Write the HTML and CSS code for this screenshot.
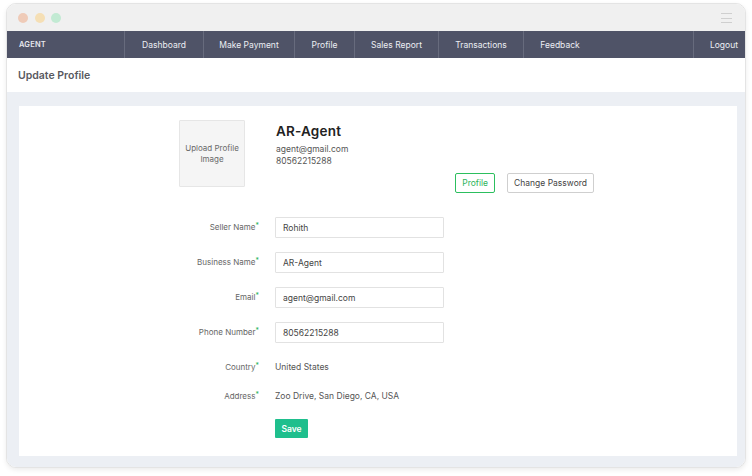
FILE: index.html
```html
<!DOCTYPE html>
<html lang="en">
<head>
<meta charset="utf-8">
<title>Update Profile</title>
<link rel="stylesheet" href="styles.css">
</head>
<body>
<div class="window">
  <div class="titlebar">
    <div class="dots">
      <span class="dot dot-red"></span>
      <span class="dot dot-yellow"></span>
      <span class="dot dot-green"></span>
    </div>
    <div class="burger"><span></span><span></span><span></span></div>
  </div>
  <nav class="nav">
    <div class="brand">AGENT</div>
    <a class="nav-item">Dashboard</a>
    <a class="nav-item">Make Payment</a>
    <a class="nav-item">Profile</a>
    <a class="nav-item">Sales Report</a>
    <a class="nav-item">Transactions</a>
    <a class="nav-item">Feedback</a>
    <div class="nav-spacer"></div>
    <a class="nav-item nav-logout">Logout</a>
  </nav>
  <div class="page-header">Update Profile</div>
  <div class="content">
    <div class="card">
      <div class="profile-top">
        <div class="upload">Upload Profile<br>Image</div>
        <div class="info">
          <div class="name">AR-Agent</div>
          <div class="meta">agent@gmail.com</div>
          <div class="meta">80562215288</div>
          <div class="tabs">
            <button class="btn btn-active">Profile</button>
            <button class="btn">Change Password</button>
          </div>
        </div>
      </div>
      <form class="form">
        <div class="row">
          <label class="label">Seller Name<span class="req">*</span></label>
          <input class="input" value="Rohith">
        </div>
        <div class="row">
          <label class="label">Business Name<span class="req">*</span></label>
          <input class="input" value="AR-Agent">
        </div>
        <div class="row">
          <label class="label">Email<span class="req">*</span></label>
          <input class="input" value="agent@gmail.com">
        </div>
        <div class="row">
          <label class="label">Phone Number<span class="req">*</span></label>
          <input class="input" value="80562215288">
        </div>
        <div class="row row-static">
          <label class="label">Country<span class="req">*</span></label>
          <span class="value">United States</span>
        </div>
        <div class="row row-static row-last">
          <label class="label">Address<span class="req">*</span></label>
          <span class="value">Zoo Drive, San Diego, CA, USA</span>
        </div>
        <div class="row row-save">
          <span class="label"></span>
          <button type="button" class="save">Save</button>
        </div>
      </form>
    </div>
  </div>
</div>
</body>
</html>
```
FILE: styles.css
```css
* { box-sizing: border-box; }
html, body { margin: 0; padding: 0; }
body {
  background: #ffffff;
  font-family: Inter, "Open Sans", sans-serif;
  width: 752px;
  height: 476px;
  overflow: hidden;
}
.window {
  margin: 3px 0 0 6px;
  width: 740px;
  height: 465px;
  border: 1px solid #e4e4e4;
  border-radius: 10px;
  overflow: hidden;
  display: flex;
  flex-direction: column;
  box-shadow: 0 2px 5px rgba(0,0,0,0.08);
  background: #fff;
}
.titlebar {
  height: 27px;
  background: #f0f0f0;
  display: flex;
  align-items: center;
  justify-content: space-between;
  padding: 0 13px 0 11px;
  flex-shrink: 0;
}
.dots { display: flex; gap: 6.5px; margin-top: 1px; }
.dot { width: 10px; height: 10px; border-radius: 50%; display: block; }
.dot-red { background: #efcbb8; }
.dot-yellow { background: #f5dfb5; }
.dot-green { background: #c2ead3; }
.burger { display: flex; flex-direction: column; gap: 3.3px; width: 11px; margin-top: 1px; }
.burger span { display: block; height: 1px; background: #cfcfcf; }

.nav {
  height: 27px;
  background: #4f5367;
  display: flex;
  align-items: stretch;
  flex-shrink: 0;
  color: #eceef3;
  font-size: 8.5px;
}
.brand {
  width: 117px;
  padding-left: 12px;
  display: flex;
  align-items: center;
  font-size: 7.5px;
  font-weight: 600;
  letter-spacing: 0.2px;
  color: #e6e7ee;
}
.nav-item {
  display: flex;
  align-items: center;
  justify-content: center;
  border-left: 1px solid #676b7d;
  white-space: nowrap;
}
.nav-item:nth-of-type(1) { width: 79px; }
.nav-item:nth-of-type(2) { width: 91px; }
.nav-item:nth-of-type(3) { width: 60px; }
.nav-item:nth-of-type(4) { width: 84px; }
.nav-item:nth-of-type(5) { width: 85px; }
.nav-item:nth-of-type(6) { width: 73px; }
.nav-spacer { flex: 1; }
.nav-logout { padding: 0 7px 0 16px; width: auto; justify-content: flex-start; }

.page-header {
  height: 34px;
  flex-shrink: 0;
  padding-left: 11px;
  display: flex;
  align-items: center;
  font-size: 10.5px;
  font-weight: 600;
  color: #58595f;
  background: #fff;
}
.content {
  flex: 1;
  background: #eceff4;
  padding: 14px 8px 11px 12px;
  display: flex;
}
.card {
  flex: 1;
  background: #fff;
  padding: 14px 0 0 160px;
}
.profile-top { display: flex; align-items: flex-start; }
.upload {
  width: 66px;
  height: 67px;
  background: #f5f5f5;
  border: 1px solid #e6e6e6;
  border-radius: 1px;
  display: flex;
  align-items: center;
  justify-content: center;
  text-align: center;
  font-size: 8px;
  line-height: 11px;
  color: #6a6a6a;
}
.info {
  margin-left: 31px;
  width: 318px;
  padding-top: 3px;
  display: flex;
  flex-direction: column;
}
.name {
  font-size: 13.5px;
  font-weight: 600;
  line-height: 16px;
  color: #222;
  letter-spacing: 0.2px;
  margin-bottom: 4px;
}
.meta {
  font-size: 8.5px;
  line-height: 12px;
  color: #555;
}
.tabs {
  display: flex;
  justify-content: flex-end;
  gap: 12px;
  margin-top: 6px;
}
.btn {
  height: 20px;
  padding: 0 6px;
  background: #fff;
  border: 1px solid #cfcfcf;
  border-radius: 2px;
  font-family: inherit;
  font-size: 8.5px;
  color: #444;
}
.btn-active {
  border: 1.5px solid #2cbf5e;
  color: #2cb35a;
}

.form {
  margin-top: 24px;
  display: flex;
  flex-direction: column;
}
.row {
  display: flex;
  align-items: center;
  height: 21px;
  margin-bottom: 14px;
}
.label {
  width: 80px;
  margin-right: 16px;
  text-align: right;
  font-size: 8px;
  color: #666;
  line-height: 12px;
  margin-top: -2px;
}
.req { color: #2cb35a; font-size: 7px; vertical-align: 2px; }
.input {
  width: 169px;
  height: 21px;
  border: 1px solid #e2e2e2;
  border-radius: 1px;
  padding: 0 7px;
  font-family: inherit;
  font-size: 8.5px;
  color: #444;
  outline: none;
}
.row-static { height: 19px; margin-bottom: 10px; }
.row-static .label { margin-top: 0; }
.row-last { margin-bottom: 14px; }
.value { font-size: 8.5px; color: #555; }
.row-save { height: 19px; }
.save {
  width: 33px;
  height: 19px;
  border: none;
  border-radius: 1px;
  background: #1fbf8d;
  color: #fff;
  font-family: inherit;
  font-weight: 600;
  font-size: 8.5px;
  padding: 0;
}
```
